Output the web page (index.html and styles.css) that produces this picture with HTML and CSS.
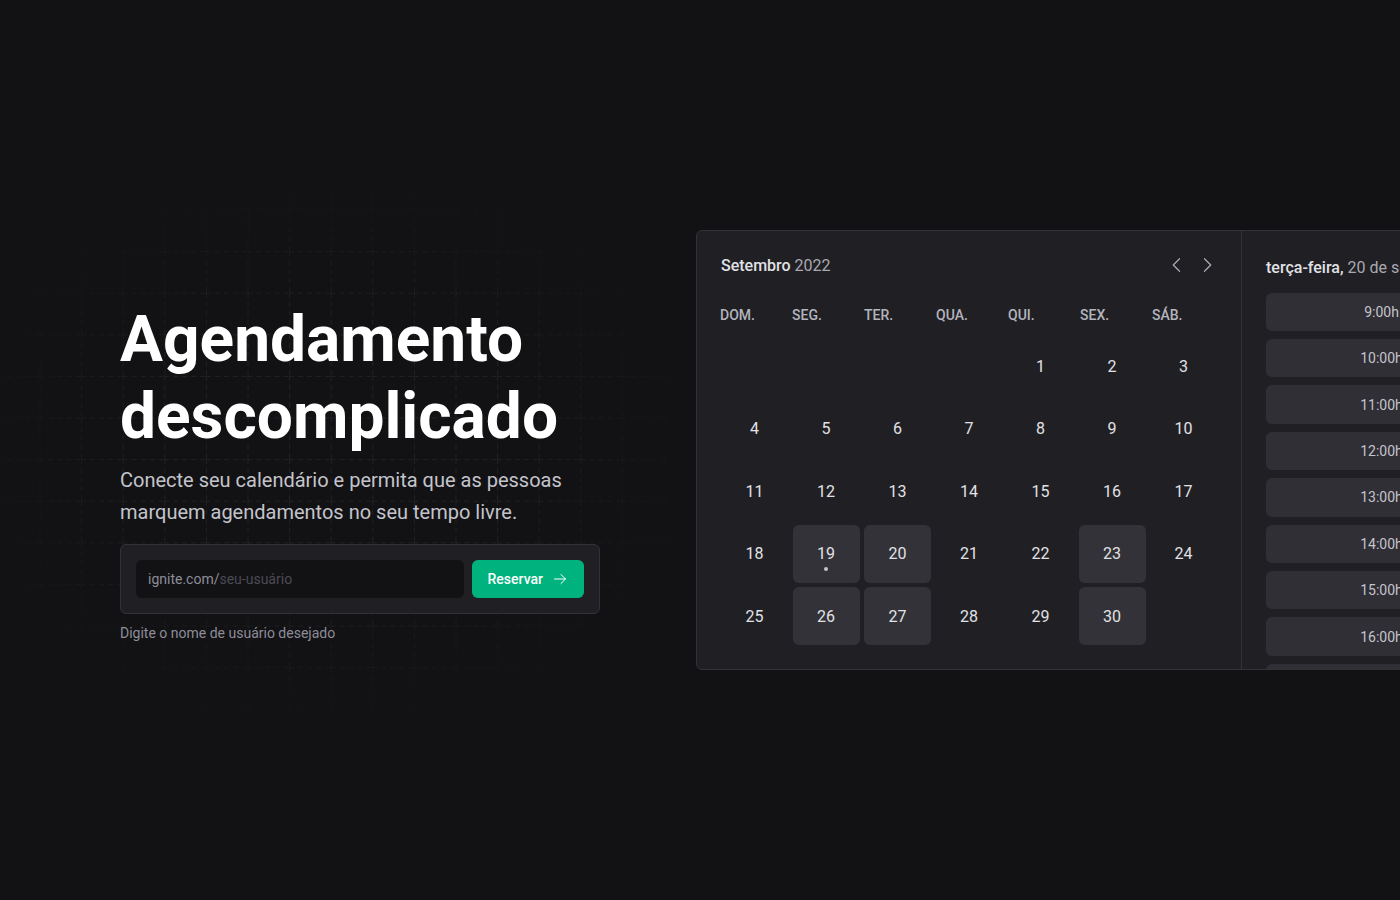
FILE: index.html
```html
<!DOCTYPE html>
<html lang="pt-BR">
<head>
<meta charset="utf-8">
<title>Ignite Call</title>
<link rel="stylesheet" href="styles.css">
</head>
<body>
<main class="page">
  <svg class="grid-bg" width="800" height="600" viewBox="0 0 800 600" aria-hidden="true">
    <defs>
      <pattern id="gridPattern" width="41.6" height="41.6" patternUnits="userSpaceOnUse" x="26.3" y="17.9">
        <path d="M0.5 0 V41.6" stroke="#212126" stroke-width="1" stroke-dasharray="5 4" fill="none"/>
        <path d="M0 0.5 H41.6" stroke="#212126" stroke-width="1" stroke-dasharray="5 4" fill="none"/>
      </pattern>
    </defs>
    <rect width="800" height="600" fill="url(#gridPattern)"/>
  </svg>

  <section class="hero">
    <h1 class="hero-title">Agendamento descomplicado</h1>
    <p class="hero-lead">Conecte seu calendário e permita que as pessoas marquem agendamentos no seu tempo livre.</p>
    <form class="claim">
      <label class="text-input">
        <span class="prefix">ignite.com/</span>
        <input class="text-field" type="text" placeholder="seu-usuário">
      </label>
      <button class="btn-primary" type="button">
        Reservar
        <svg width="16" height="16" viewBox="0 0 256 256" fill="none" stroke="currentColor" stroke-width="16" stroke-linecap="round" stroke-linejoin="round"><line x1="40" y1="128" x2="216" y2="128"/><polyline points="144 56 216 128 144 200"/></svg>
      </button>
    </form>
    <p class="annotation">Digite o nome de usuário desejado</p>
  </section>

  <section class="preview">
    <div class="card">
      <div class="calendar">
        <div class="cal-header">
          <div class="month">Setembro <span>2022</span></div>
          <div class="actions">
            <svg width="20" height="20" viewBox="0 0 256 256" fill="none" stroke="currentColor" stroke-width="16" stroke-linecap="round" stroke-linejoin="round"><polyline points="160 208 80 128 160 48"/></svg>
            <svg width="20" height="20" viewBox="0 0 256 256" fill="none" stroke="currentColor" stroke-width="16" stroke-linecap="round" stroke-linejoin="round"><polyline points="96 48 176 128 96 208"/></svg>
          </div>
        </div>
        <div class="weekdays">
          <span>DOM.</span><span>SEG.</span><span>TER.</span><span>QUA.</span><span>QUI.</span><span>SEX.</span><span>SÁB.</span>
        </div>
        <div class="days">
          <span class="day"></span><span class="day"></span><span class="day"></span><span class="day"></span>
          <span class="day">1</span><span class="day">2</span><span class="day">3</span>
          <span class="day">4</span><span class="day">5</span><span class="day">6</span><span class="day">7</span><span class="day">8</span><span class="day">9</span><span class="day">10</span>
          <span class="day">11</span><span class="day">12</span><span class="day">13</span><span class="day">14</span><span class="day">15</span><span class="day">16</span><span class="day">17</span>
          <span class="day">18</span><span class="day available today">19</span><span class="day available">20</span><span class="day">21</span><span class="day">22</span><span class="day available">23</span><span class="day">24</span>
          <span class="day">25</span><span class="day available">26</span><span class="day available">27</span><span class="day">28</span><span class="day">29</span><span class="day available">30</span><span class="day"></span>
        </div>
      </div>
      <div class="timepicker">
        <div class="tp-header">terça-feira, <span>20 de setembro</span></div>
        <div class="slots">
          <div class="slot">9:00h</div>
          <div class="slot">10:00h</div>
          <div class="slot">11:00h</div>
          <div class="slot">12:00h</div>
          <div class="slot">13:00h</div>
          <div class="slot">14:00h</div>
          <div class="slot">15:00h</div>
          <div class="slot">16:00h</div>
          <div class="slot">17:00h</div>
          <div class="slot">18:00h</div>
        </div>
      </div>
    </div>
  </section>
</main>
</body>
</html>
```

FILE: styles.css
```css
html, body {
  margin: 0;
  padding: 0;
  background: #121214;
  overflow: hidden;
}

body {
  font-family: Roboto, "Liberation Sans", sans-serif;
  color: #E1E1E6;
  -webkit-font-smoothing: antialiased;
}

.page {
  position: relative;
  box-sizing: border-box;
  height: 100vh;
  display: flex;
  align-items: center;
  gap: 96px;
  padding-left: 120px;
  overflow: hidden;
}

.grid-bg {
  position: absolute;
  left: -70px;
  top: 150px;
  pointer-events: none;
  -webkit-mask-image: radial-gradient(closest-side ellipse, #000 45%, transparent 100%);
  mask-image: radial-gradient(closest-side ellipse, #000 45%, transparent 100%);
}

/* Hero */
.hero {
  position: relative;
  width: 480px;
  flex-shrink: 0;
  margin-top: 46px;
}

.hero-title {
  margin: 0;
  font-size: 64px;
  line-height: 1.2;
  font-weight: 700;
  color: #FFFFFF;
}

.hero-lead {
  margin: 8px 0 0;
  font-size: 20px;
  line-height: 1.6;
  color: #C4C4CC;
}

.claim {
  margin-top: 16px;
  display: grid;
  grid-template-columns: 1fr auto;
  gap: 8px;
  padding: 15px;
  background: #202024;
  border: 1px solid #323238;
  border-radius: 6px;
}

.text-input {
  display: flex;
  align-items: center;
  height: 38px;
  padding: 0 12px;
  background: #121214;
  border-radius: 6px;
  font-size: 14px;
}

.prefix {
  color: #8D8D99;
}

.text-field {
  flex: 1;
  min-width: 0;
  padding: 0;
  border: 0;
  outline: 0;
  background: transparent;
  font-family: inherit;
  font-size: 14px;
  color: #E1E1E6;
}

.text-field::placeholder {
  color: #4B4B55;
}

.btn-primary {
  display: flex;
  align-items: center;
  gap: 9px;
  height: 38px;
  padding: 0 16px;
  border: 0;
  border-radius: 6px;
  background: #00B37E;
  color: #FFFFFF;
  font-family: inherit;
  font-size: 14px;
  font-weight: 500;
}

.annotation {
  margin: 8px 0 0;
  font-size: 14px;
  line-height: 1.6;
  color: #8D8D99;
}

/* Preview card */
.preview {
  flex-shrink: 0;
}

.card {
  display: grid;
  grid-template-columns: 544px 280px;
  background: #202024;
  border: 1px solid #323238;
  border-radius: 6px;
}

.calendar {
  display: flex;
  flex-direction: column;
  padding: 24px;
}

.cal-header {
  display: flex;
  align-items: center;
  justify-content: space-between;
  height: 20px;
}

.month {
  font-size: 16px;
  font-weight: 500;
  color: #E1E1E6;
}

.month span {
  font-weight: 400;
  color: #A9A9B2;
}

.actions {
  display: flex;
  gap: 10px;
  color: #A9A9B2;
}

.weekdays {
  margin: 24px 0 0 -1px;
  height: 32px;
  display: grid;
  grid-template-columns: repeat(7, 72px);
  align-items: center;
  font-size: 14px;
  font-weight: 500;
  color: #B4B4BD;
}

.days {
  margin-top: 6px;
  display: grid;
  grid-template-columns: repeat(7, 67px);
  grid-auto-rows: 58px;
  gap: 4.5px;
}

.day {
  position: relative;
  display: flex;
  align-items: center;
  justify-content: center;
  border-radius: 6px;
  font-size: 16px;
  color: #E1E1E6;
}

.day.available {
  background: #323238;
}

.day.today::after {
  content: "";
  position: absolute;
  left: 50%;
  bottom: 12px;
  width: 4px;
  height: 4px;
  margin-left: -2px;
  border-radius: 50%;
  background: #C4C4CC;
}

/* Time picker */
.timepicker {
  border-left: 1px solid #323238;
  padding: 24px 24px 0;
  overflow: hidden;
  contain: size;
}

.tp-header {
  font-size: 16px;
  line-height: 1.6;
  font-weight: 500;
  color: #E1E1E6;
  white-space: nowrap;
}

.tp-header span {
  font-weight: 400;
  color: #A9A9B2;
}

.slots {
  margin-top: 12px;
  display: flex;
  flex-direction: column;
  gap: 8px;
}

.slot {
  height: 38.4px;
  display: flex;
  align-items: center;
  justify-content: center;
  background: #2F2F35;
  border-radius: 6px;
  font-size: 14px;
  color: #C4C4CC;
}
```
